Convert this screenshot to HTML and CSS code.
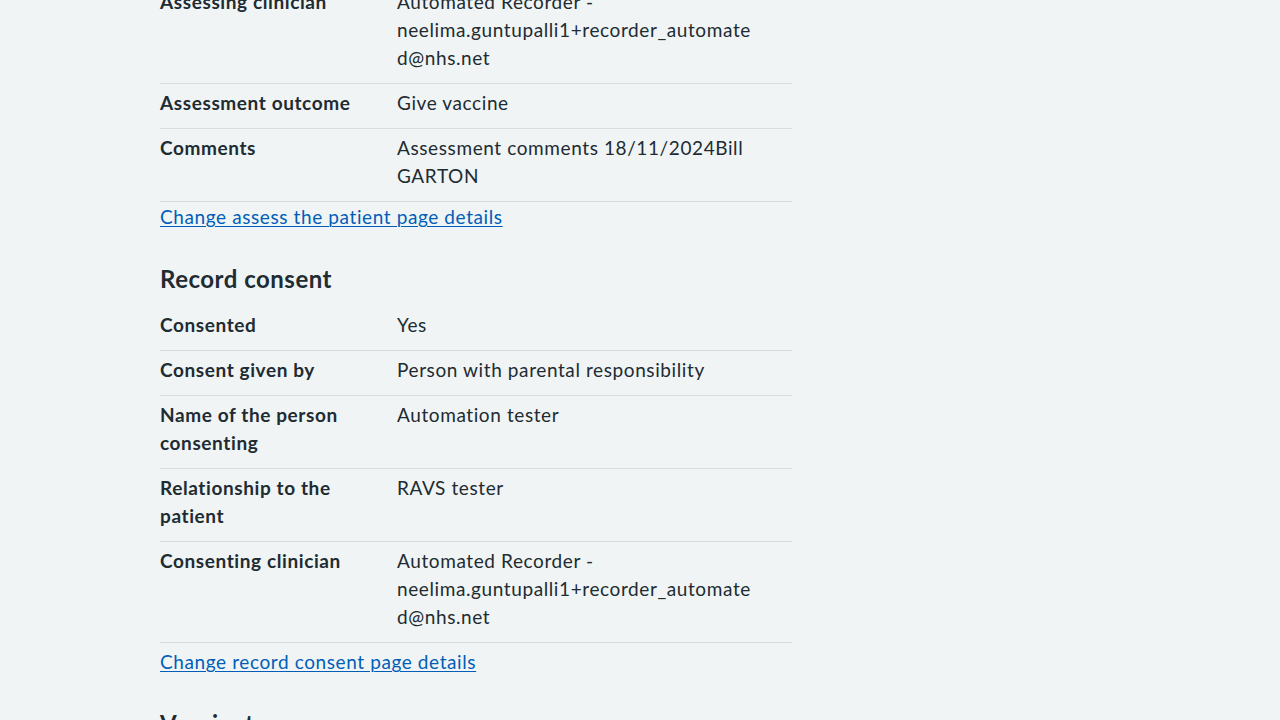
FILE: index.html
```html
<!DOCTYPE html>
<html lang="en">
<head>
<meta charset="utf-8">
<title>Check and confirm</title>
<link rel="stylesheet" href="styles.css">
</head>
<body>
<main class="page">
  <div class="content">
    <dl class="summary summary--scrolled">
      <div class="summary__row">
        <dt class="summary__key">Assessing clinician</dt>
        <dd class="summary__value">Automated Recorder - neelima.guntupalli1+recorder_automate<wbr>d@nhs.net</dd>
      </div>
      <div class="summary__row">
        <dt class="summary__key">Assessment outcome</dt>
        <dd class="summary__value">Give vaccine</dd>
      </div>
      <div class="summary__row">
        <dt class="summary__key">Comments</dt>
        <dd class="summary__value">Assessment comments 18/11/2024Bill GARTON</dd>
      </div>
    </dl>
    <p class="change change--first"><a class="link" href="#">Change assess the patient page details</a></p>

    <h2 class="heading">Record consent</h2>
    <dl class="summary">
      <div class="summary__row">
        <dt class="summary__key">Consented</dt>
        <dd class="summary__value">Yes</dd>
      </div>
      <div class="summary__row">
        <dt class="summary__key">Consent given by</dt>
        <dd class="summary__value">Person with parental responsibility</dd>
      </div>
      <div class="summary__row">
        <dt class="summary__key">Name of the person consenting</dt>
        <dd class="summary__value">Automation tester</dd>
      </div>
      <div class="summary__row">
        <dt class="summary__key">Relationship to the patient</dt>
        <dd class="summary__value">RAVS tester</dd>
      </div>
      <div class="summary__row">
        <dt class="summary__key">Consenting clinician</dt>
        <dd class="summary__value">Automated Recorder - neelima.guntupalli1+recorder_automate<wbr>d@nhs.net</dd>
      </div>
    </dl>
    <p class="change"><a class="link" href="#">Change record consent page details</a></p>

    <h2 class="heading">Vaccinate</h2>
  </div>
</main>
</body>
</html>
```

FILE: styles.css
```css
html, body {
  margin: 0;
  padding: 0;
  background: #f0f4f5;
}

body {
  font-family: "Lato", "Open Sans", "Liberation Sans", sans-serif;
  color: #212b32;
  font-size: 19px;
  line-height: 28px;
  letter-spacing: 0.6px;
  height: 720px;
  overflow: hidden;
}

.page {
  padding-left: 160px;
}

.content {
  width: 632px;
}

.summary {
  margin: 0;
  padding: 0;
}

.summary--scrolled {
  margin-top: -17px;
}

.summary__row {
  display: grid;
  grid-template-columns: 237px 1fr;
  border-bottom: 1px solid #d8dde0;
}

.summary__key,
.summary__value {
  margin: 0;
  padding: 5px 24px 11px 0;
}

.summary__key {
  font-weight: 700;
}

.summary__value {
  overflow-wrap: anywhere;
}

.change {
  margin: 5px 0 0;
}

.change--first {
  margin-top: 1px;
}

.link {
  color: #005eb8;
  text-decoration: underline;
  text-underline-offset: 2px;
  text-decoration-thickness: 1px;
}

.heading {
  margin: 32px 0 11px;
  font-size: 24px;
  line-height: 32px;
  font-weight: 700;
  letter-spacing: 0.5px;
}
```
